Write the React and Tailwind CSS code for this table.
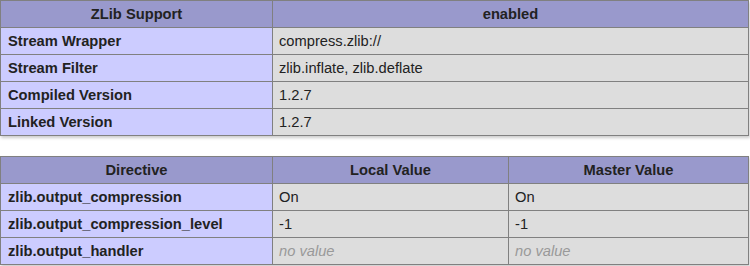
import React from "react";

const font = { fontFamily: '"Liberation Sans", Arial, sans-serif' };

function Cell({ kind, children, italic }) {
  const base = "h-[26px] flex items-center px-[6px] whitespace-nowrap overflow-hidden";
  if (kind === "h") return <div className={`${base} justify-center font-bold bg-[#9999cc] text-[#222]`}>{children}</div>;
  if (kind === "e") return <div className={`${base} pl-[7px] font-bold bg-[#ccccff] text-[#222]`}>{children}</div>;
  return (
    <div className={`${base} bg-[#dddddd] ${italic ? "italic text-[#999]" : "text-[#222]"}`}>{children}</div>
  );
}

export default function App() {
  const noValue = "no value";
  return (
    <div className="w-[750px] h-[266px] bg-white text-[14.7px] leading-none" style={font}>
      <div className="grid grid-cols-[271px_475px] gap-px p-px bg-[#808080] w-[749px] shadow-[1px_2px_3px_#ccc]">
        <Cell kind="h">ZLib Support</Cell>
        <Cell kind="h">enabled</Cell>
        <Cell kind="e">Stream Wrapper</Cell>
        <Cell kind="v">compress.zlib://</Cell>
        <Cell kind="e">Stream Filter</Cell>
        <Cell kind="v">zlib.inflate, zlib.deflate</Cell>
        <Cell kind="e">Compiled Version</Cell>
        <Cell kind="v">1.2.7</Cell>
        <Cell kind="e">Linked Version</Cell>
        <Cell kind="v">1.2.7</Cell>
      </div>
      <div className="mt-[20px] grid grid-cols-[271px_235px_239px] gap-px p-px bg-[#808080] w-[749px] shadow-[1px_2px_3px_#ccc]">
        <Cell kind="h">Directive</Cell>
        <Cell kind="h">Local Value</Cell>
        <Cell kind="h">Master Value</Cell>
        <Cell kind="e">zlib.output_compression</Cell>
        <Cell kind="v">On</Cell>
        <Cell kind="v">On</Cell>
        <Cell kind="e">zlib.output_compression_level</Cell>
        <Cell kind="v">-1</Cell>
        <Cell kind="v">-1</Cell>
        <Cell kind="e">zlib.output_handler</Cell>
        <Cell kind="v" italic>{noValue}</Cell>
        <Cell kind="v" italic>{noValue}</Cell>
      </div>
    </div>
  );
}
